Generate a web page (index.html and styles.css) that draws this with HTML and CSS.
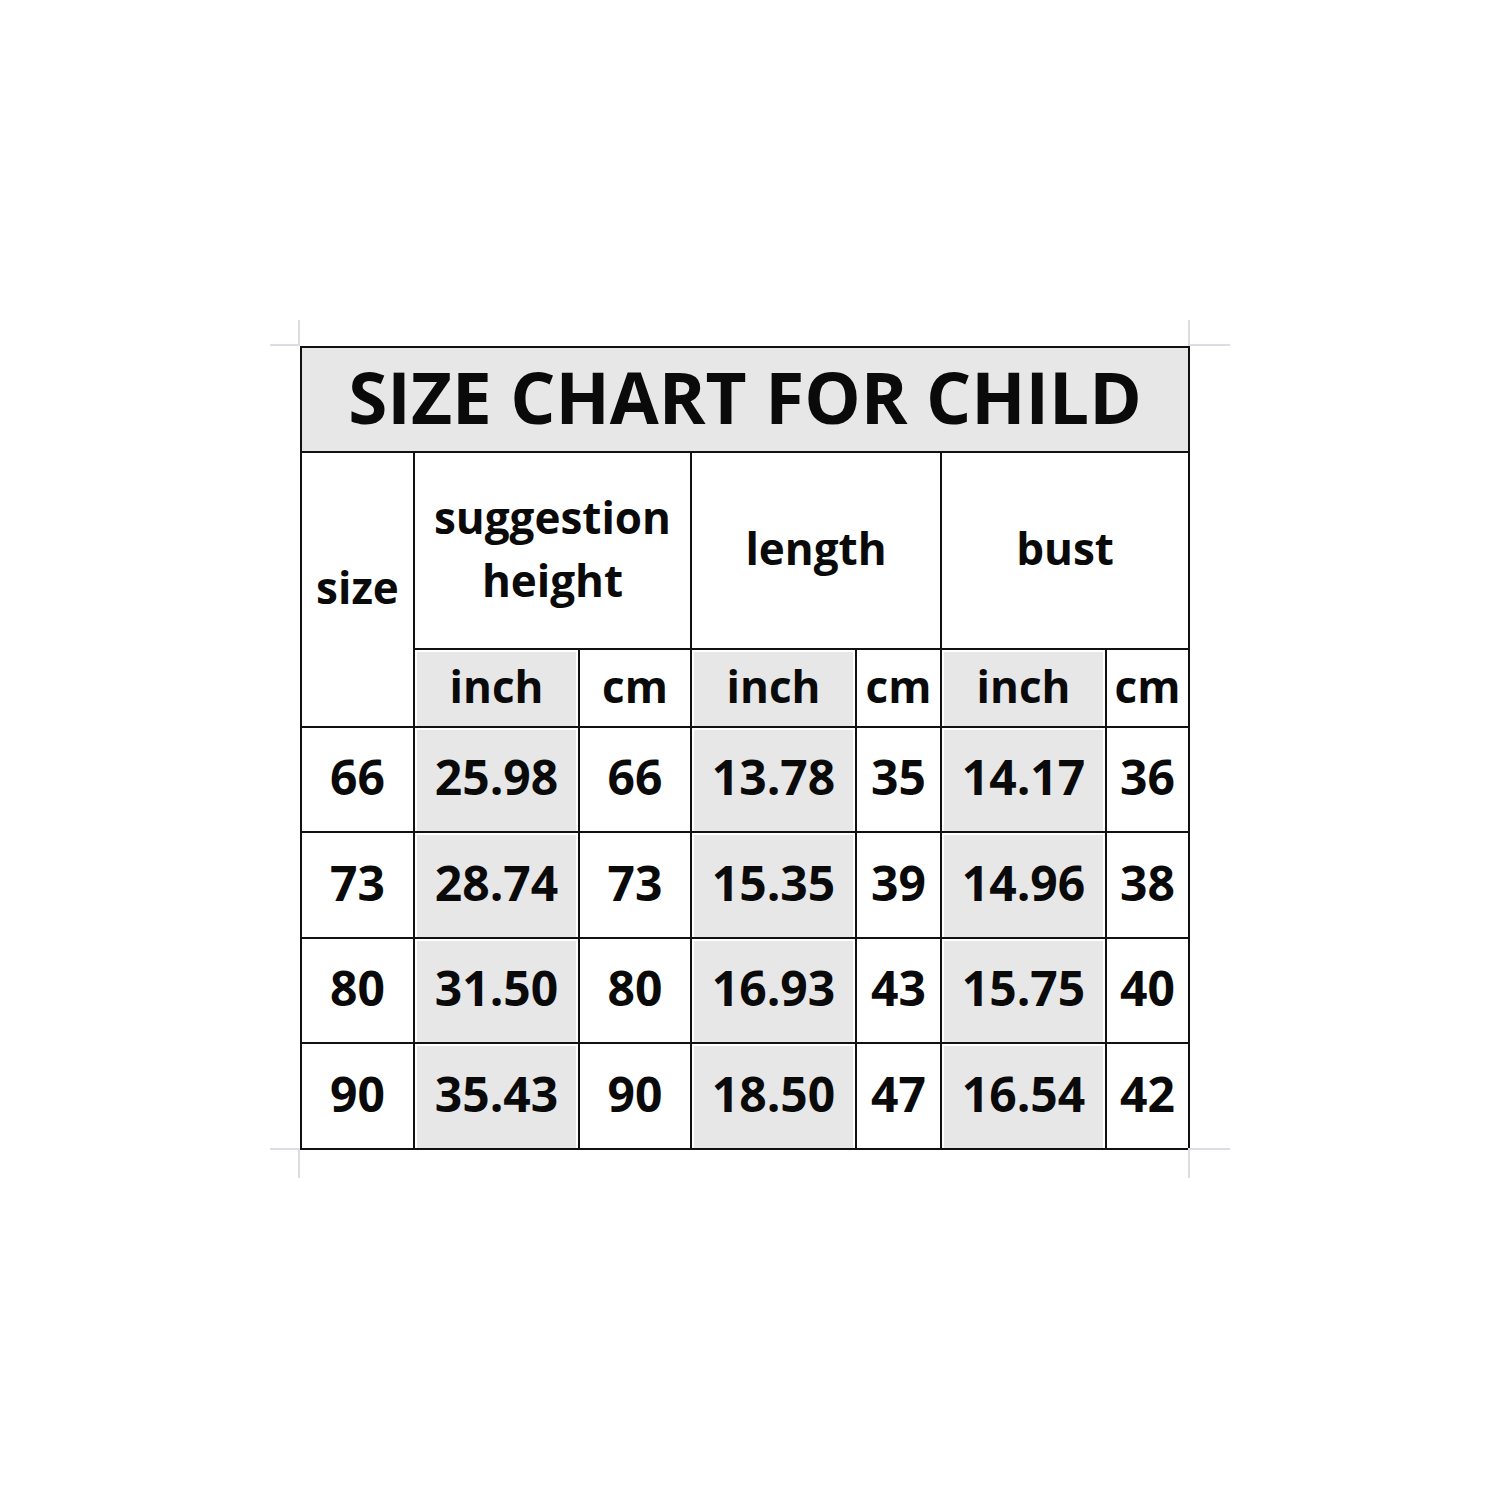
FILE: index.html
```html
<!DOCTYPE html>
<html lang="en">
<head>
<meta charset="utf-8">
<title>Size chart for child</title>
<link rel="stylesheet" href="styles.css">
</head>
<body>
<div class="sheet">
  <span class="mark mark-tl"></span>
  <span class="mark mark-tr"></span>
  <span class="mark mark-bl"></span>
  <span class="mark mark-br"></span>
  <div class="chart">
    <div class="cell title gray">SIZE CHART FOR CHILD</div>

    <div class="cell head size-head">size</div>
    <div class="cell head group sugg">suggestion<br>height</div>
    <div class="cell head group len">length</div>
    <div class="cell head group bust">bust</div>

    <div class="cell head gray">inch</div>
    <div class="cell head">cm</div>
    <div class="cell head gray">inch</div>
    <div class="cell head">cm</div>
    <div class="cell head gray">inch</div>
    <div class="cell head">cm</div>

    <div class="cell num">66</div>
    <div class="cell num gray">25.98</div>
    <div class="cell num">66</div>
    <div class="cell num gray">13.78</div>
    <div class="cell num">35</div>
    <div class="cell num gray">14.17</div>
    <div class="cell num">36</div>

    <div class="cell num">73</div>
    <div class="cell num gray">28.74</div>
    <div class="cell num">73</div>
    <div class="cell num gray">15.35</div>
    <div class="cell num">39</div>
    <div class="cell num gray">14.96</div>
    <div class="cell num">38</div>

    <div class="cell num">80</div>
    <div class="cell num gray">31.50</div>
    <div class="cell num">80</div>
    <div class="cell num gray">16.93</div>
    <div class="cell num">43</div>
    <div class="cell num gray">15.75</div>
    <div class="cell num">40</div>

    <div class="cell num">90</div>
    <div class="cell num gray">35.43</div>
    <div class="cell num">90</div>
    <div class="cell num gray">18.50</div>
    <div class="cell num">47</div>
    <div class="cell num gray">16.54</div>
    <div class="cell num">42</div>
  </div>
</div>
</body>
</html>
```

FILE: styles.css
```css
html, body {
  margin: 0;
  padding: 0;
  background: #ffffff;
}

body {
  width: 1500px;
  height: 1500px;
  font-family: "Open Sans", "Noto Sans", "DejaVu Sans", sans-serif;
  font-weight: 700;
  color: #0a0a0a;
}

.sheet {
  position: relative;
  width: 1500px;
  height: 1500px;
  padding: 346px 0 0 300px;
  box-sizing: border-box;
}

.chart {
  display: grid;
  grid-template-columns: 111px 163px 110px 163px 83px 163px 81px;
  grid-template-rows: 103px 195px 76px 103px 104px 103px 104px;
  gap: 2px;
  padding: 2px;
  background: #111111;
  width: max-content;
}

.cell {
  background: #ffffff;
  display: flex;
  align-items: center;
  justify-content: center;
  text-align: center;
  white-space: nowrap;
}

.gray {
  background: #e7e7e7;
  box-shadow: inset 2px 2px 0 #ffffff, inset -2px 0 0 #ffffff;
}

.title {
  grid-column: 1 / span 7;
  font-size: 71px;
  line-height: 1;
  box-shadow: none;
  padding-bottom: 6px;
}

.head {
  font-size: 44px;
  line-height: 1.4;
  padding-bottom: 3px;
}

.size-head {
  grid-row: span 2;
}

.sugg {
  grid-column: span 2;
  line-height: 63px;
}

.len,
.bust {
  grid-column: span 2;
}

.num {
  font-size: 48px;
  line-height: 1;
  padding-bottom: 5px;
}

.mark {
  position: absolute;
  width: 30px;
  height: 26px;
  border: 0 solid #dcdce6;
  box-sizing: border-box;
}

.mark-tl {
  left: 270px;
  top: 320px;
  border-right-width: 2px;
  border-bottom-width: 2px;
}

.mark-tr {
  left: 1188px;
  top: 320px;
  width: 42px;
  border-left-width: 2px;
  border-bottom-width: 2px;
}

.mark-bl {
  left: 270px;
  top: 1148px;
  height: 30px;
  border-right-width: 2px;
  border-top-width: 2px;
}

.mark-br {
  left: 1188px;
  top: 1148px;
  width: 42px;
  height: 30px;
  border-left-width: 2px;
  border-top-width: 2px;
}
```
